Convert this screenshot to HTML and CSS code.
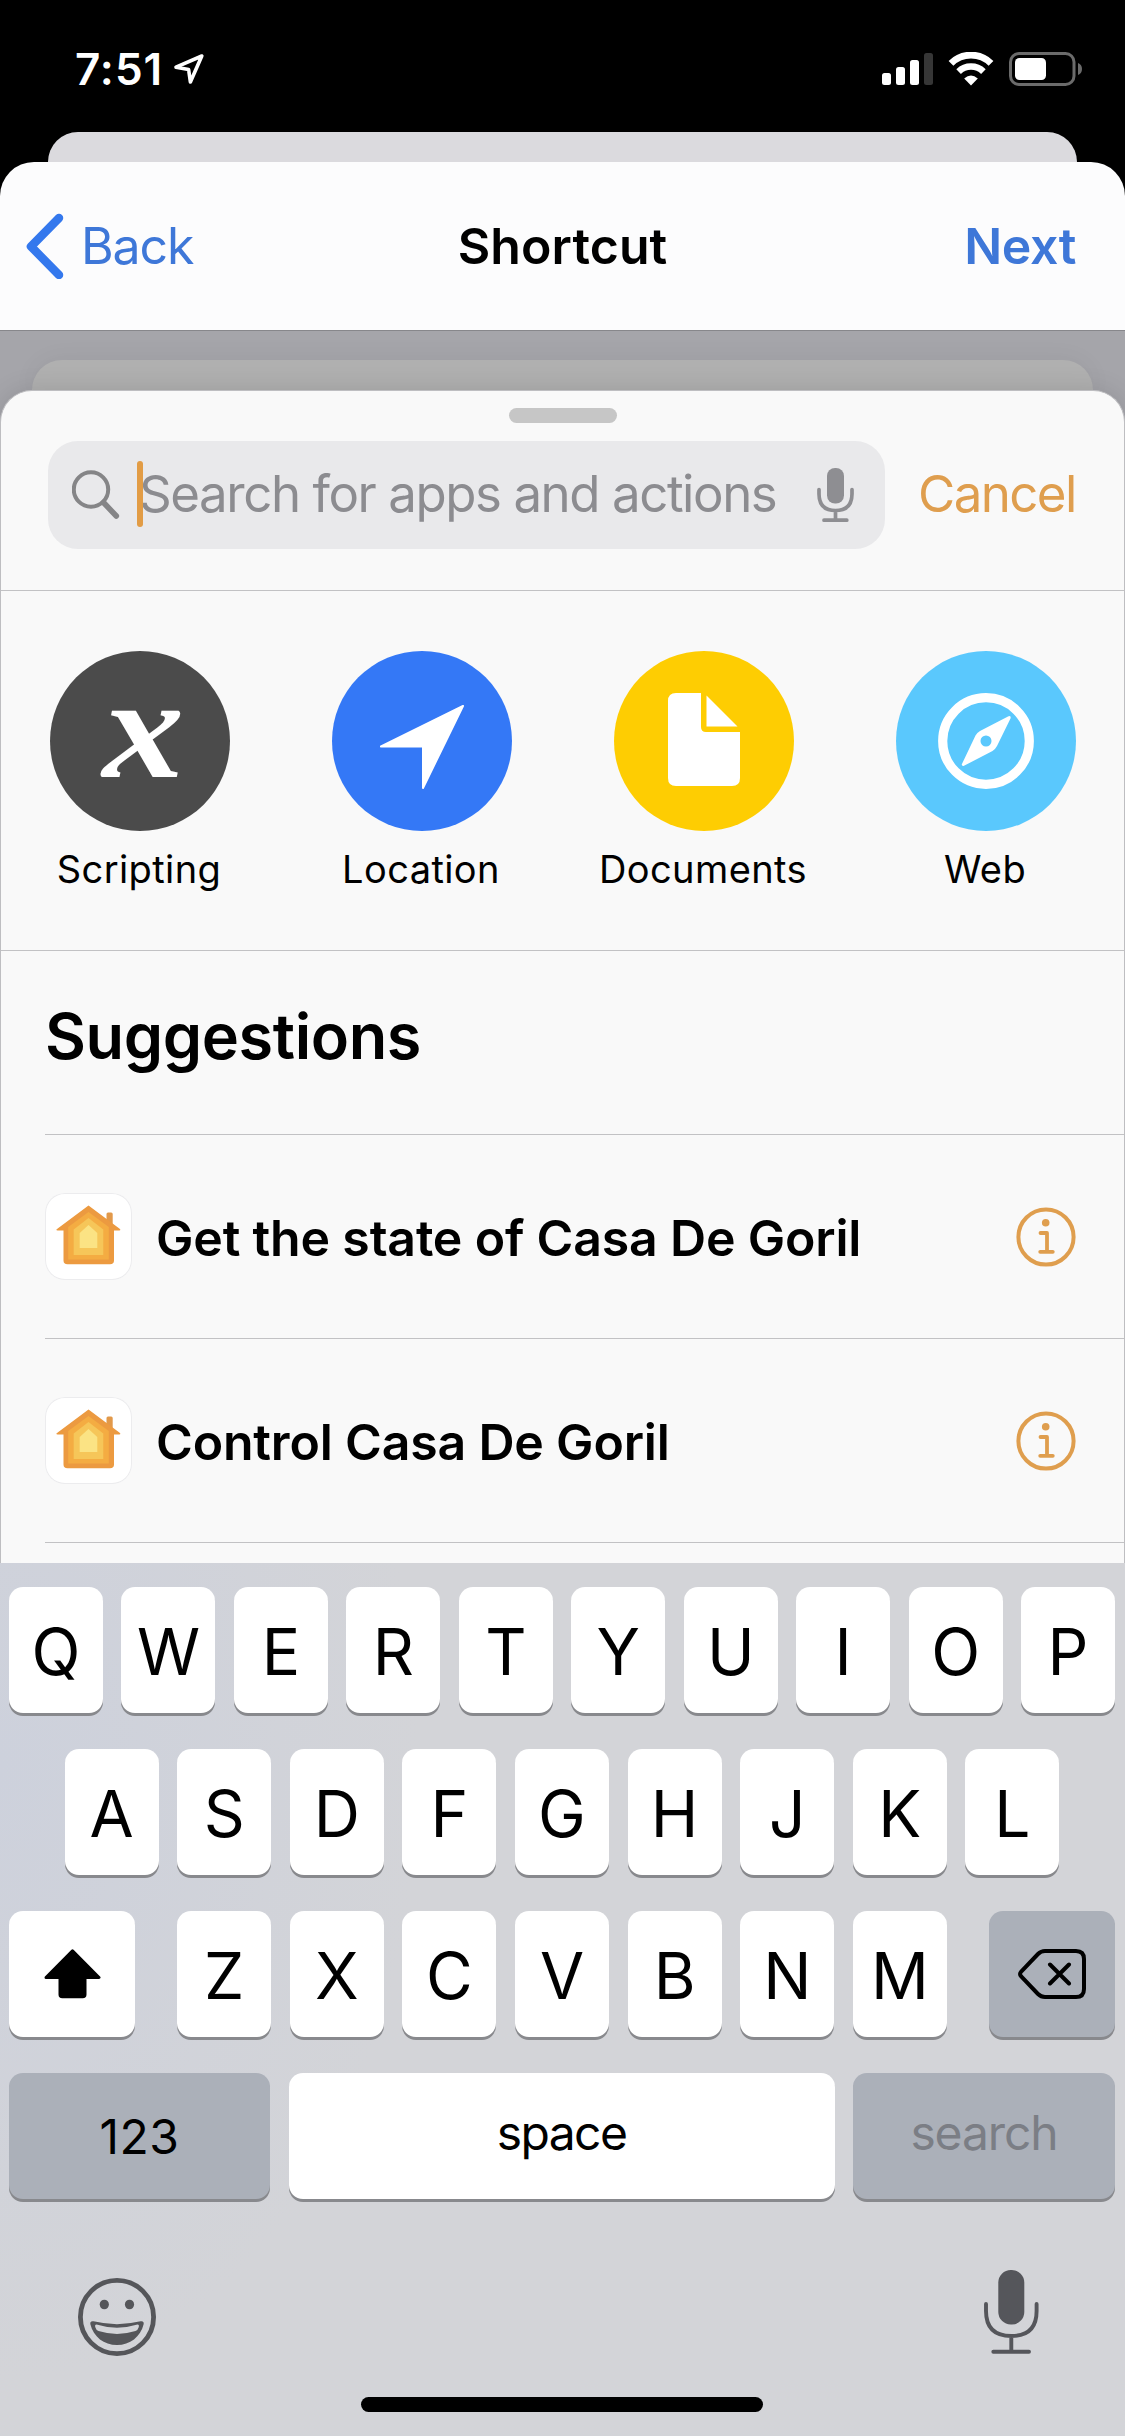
FILE: index.html
```html
<!DOCTYPE html>
<html lang="en">
<head>
<meta charset="utf-8">
<title>Shortcut</title>
<link rel="stylesheet" href="styles.css">
</head>
<body>
<div class="phone">
  <header class="status">
    <span class="time">7:51</span>
    <svg class="loc" width="34" height="34" viewBox="0 0 34 34"><path d="M28.8 4 L3 15.2 L15.6 17.6 L17.4 30 Z" fill="none" stroke="#fff" stroke-width="3.6" stroke-linejoin="round"/></svg>
    <div class="status-right">
      <svg width="51" height="34" viewBox="0 0 51 34"><rect x="0" y="21" width="9" height="12" rx="2.5" fill="#fff"/><rect x="14" y="15" width="9" height="18" rx="2.5" fill="#fff"/><rect x="28" y="8" width="9" height="25" rx="2.5" fill="#fff"/><rect x="42" y="1" width="9" height="32" rx="2.5" fill="#363636"/></svg>
      <svg width="46" height="34" viewBox="0 0 46 34"><path d="M3 11.3 A28.5 28.5 0 0 1 43 11.3" fill="none" stroke="#fff" stroke-width="6.8"/><path d="M10.6 19.6 A17.8 17.8 0 0 1 35.4 19.6" fill="none" stroke="#fff" stroke-width="6.6"/><path d="M16.2 26.4 Q23 20.6 29.8 26.4 L23 33.4 Z" fill="#fff"/></svg>
      <svg width="74" height="34" viewBox="0 0 74 34"><rect x="1.5" y="1.5" width="63.5" height="31" rx="8.5" fill="none" stroke="#6b6b6b" stroke-width="3"/><rect x="6" y="6" width="31" height="22" rx="4.5" fill="#fff"/><path d="M69 11 Q73 12.500 73 17 Q73 21.500 69 23 Z" fill="#6b6b6b"/></svg>
    </div>
  </header>

  <div class="peek peek-back"></div>
  <nav class="nav">
    <a class="back">
      <svg width="40" height="66" viewBox="0 0 40 66"><path d="M34 5 L6 33.500 L34 62" fill="none" stroke="#3478ed" stroke-width="8.5" stroke-linecap="round" stroke-linejoin="round"/></svg>
      <span>Back</span>
    </a>
    <h1 class="title">Shortcut</h1>
    <a class="next">Next</a>
  </nav>

  <div class="dim">
    <div class="peek peek-front"></div>
    <main class="sheet">
      <div class="handle"></div>
      <div class="search-row">
        <div class="field">
          <svg class="glass" width="50" height="50" viewBox="0 0 50 50"><circle cx="19" cy="19.500" r="17.2" fill="none" stroke="#858587" stroke-width="4"/><path d="M31.500 32.500 L44.300 46" stroke="#858587" stroke-width="5.600" stroke-linecap="round"/></svg>
          <span class="placeholder">Search for apps and actions<i class="caret"></i></span>
          <svg class="field-mic" width="37" height="55" viewBox="0 0 37 55"><rect x="10" y="0" width="17" height="35.500" rx="8" fill="#8e8e92"/><path d="M2 21.500 V26 Q2 42.500 18.500 42.500 Q35 42.500 35 26 V21.500 M18.500 43 V52 M7 52.200 H29.800" fill="none" stroke="#8e8e92" stroke-width="3.700" stroke-linecap="round"/></svg>
        </div>
        <a class="cancel">Cancel</a>
      </div>

      <section class="categories">
        <div class="cat"><div class="disc dark"><span class="var">x</span></div><span class="label">Scripting</span></div>
        <div class="cat"><div class="disc blue"><svg width="180" height="180" viewBox="0 0 180 180"><path d="M131 55 L49 95.500 H91 V137 Z" fill="#fff" stroke="#fff" stroke-width="2" stroke-linejoin="round"/></svg></div><span class="label">Location</span></div>
        <div class="cat"><div class="disc yellow"><svg width="180" height="180" viewBox="0 0 180 180"><path d="M87 42 V76 Q87 81 92 81 H126 V127 Q126 135 118 135 H62 Q54 135 54 127 V50 Q54 42 62 42 Z" fill="#fff"/><path d="M92.500 44.500 L123.500 75.500 H92.500 Z" fill="#fff"/></svg></div><span class="label">Documents</span></div>
        <div class="cat"><div class="disc sky"><svg width="180" height="180" viewBox="0 0 180 180"><circle cx="90" cy="90" r="43.300" fill="none" stroke="#fff" stroke-width="9.200"/><path fill-rule="evenodd" d="M114.500 65.500 Q115 66.800 114 68.500 L101 95 Q99.500 98 96.500 100 L68 114.800 Q66 115.500 65.700 113.500 L79.500 84.500 Q81 81.500 84 80 L112 65.400 Q113.800 64.600 114.500 65.500 Z M90 84.500 A5.500 5.500 0 1 0 90 95.500 A5.500 5.500 0 1 0 90 84.500 Z" fill="#fff"/></svg></div><span class="label">Web</span></div>
      </section>

      <h2 class="heading">Suggestions</h2>

      <div class="list">
        <div class="row">
          <div class="app"><svg width="87" height="87" viewBox="0 0 87 87"><path d="M61.500 32 V21 Q61.500 19.500 63 19.500 H66.200 Q67.700 19.500 67.700 21 V37 H61.500 Z" fill="#e2994a"/><path d="M43.500 12.500 L75 36 Q76 37.300 74.500 37.500 H69 V67.500 Q69 71.300 65 71.300 H22.500 Q18.500 71.300 18.500 67.500 V37.500 H12.500 Q10.500 37.300 12 36 Z" fill="#ec9a40"/><path d="M43.500 19 L63.800 34 V66.500 H23.200 V34 Z" fill="#f4ac42"/><path d="M43.500 25 L58.300 36.500 V62 H28.700 V36.500 Z" fill="#f6c659"/><path d="M43.500 32 L52.300 40 V55 H34.700 V40 Z" fill="#fbe384"/></svg></div>
          <span class="name">Get the state of Casa De Goril</span>
          <svg class="info" width="60" height="60" viewBox="0 0 60 60"><circle cx="30" cy="30" r="27.600" fill="none" stroke="#df9e4e" stroke-width="4"/><circle cx="29.700" cy="15.700" r="3.800" fill="#df9e4e"/><path d="M24.500 26 H31 V44.500 M24.200 44.800 H36.800" fill="none" stroke="#df9e4e" stroke-width="3.800" stroke-linecap="round" stroke-linejoin="round"/></svg>
        </div>
        <div class="row">
          <div class="app"><svg width="87" height="87" viewBox="0 0 87 87"><path d="M61.500 32 V21 Q61.500 19.500 63 19.500 H66.200 Q67.700 19.500 67.700 21 V37 H61.500 Z" fill="#e2994a"/><path d="M43.500 12.500 L75 36 Q76 37.300 74.500 37.500 H69 V67.500 Q69 71.300 65 71.300 H22.500 Q18.500 71.300 18.500 67.500 V37.500 H12.500 Q10.500 37.300 12 36 Z" fill="#ec9a40"/><path d="M43.500 19 L63.800 34 V66.500 H23.200 V34 Z" fill="#f4ac42"/><path d="M43.500 25 L58.300 36.500 V62 H28.700 V36.500 Z" fill="#f6c659"/><path d="M43.500 32 L52.300 40 V55 H34.700 V40 Z" fill="#fbe384"/></svg></div>
          <span class="name">Control Casa De Goril</span>
          <svg class="info" width="60" height="60" viewBox="0 0 60 60"><circle cx="30" cy="30" r="27.600" fill="none" stroke="#df9e4e" stroke-width="4"/><circle cx="29.700" cy="15.700" r="3.800" fill="#df9e4e"/><path d="M24.500 26 H31 V44.500 M24.200 44.800 H36.800" fill="none" stroke="#df9e4e" stroke-width="3.800" stroke-linecap="round" stroke-linejoin="round"/></svg>
        </div>
      </div>
    </main>
  </div>

  <div class="keyboard">
    <div class="keys">
      <b class="key">Q</b><b class="key">W</b><b class="key">E</b><b class="key">R</b><b class="key">T</b><b class="key">Y</b><b class="key">U</b><b class="key">I</b><b class="key">O</b><b class="key">P</b>
    </div>
    <div class="keys middle">
      <b class="key">A</b><b class="key">S</b><b class="key">D</b><b class="key">F</b><b class="key">G</b><b class="key">H</b><b class="key">J</b><b class="key">K</b><b class="key">L</b>
    </div>
    <div class="keys">
      <b class="key shift"><svg width="57" height="50" viewBox="0 0 57 50"><path d="M28.500 1.800 L55 28.500 H41 V45.500 Q41 47.800 38.700 47.800 H18.300 Q16 47.800 16 45.500 V28.500 H2 Z" fill="#000" stroke="#000" stroke-width="3" stroke-linejoin="round"/></svg></b>
      <b class="key">Z</b><b class="key">X</b><b class="key">C</b><b class="key">V</b><b class="key">B</b><b class="key">N</b><b class="key">M</b>
      <b class="key gray delete"><svg width="68" height="50" viewBox="0 0 68 50"><path d="M27 2 H58 Q66 2 66 10 V40 Q66 48 58 48 H27 Q23 48 20 45 L3.200 27.500 Q1 25 3.200 22.500 L20 5 Q23 2 27 2 Z M32 15.500 L51 34.500 M51 15.500 L32 34.500" fill="none" stroke="#000" stroke-width="4" stroke-linecap="round"/></svg></b>
    </div>
    <div class="keys words">
      <b class="key gray numbers">123</b><b class="key space"><span>space</span></b><b class="key gray search"><span>search</span></b>
    </div>
    <div class="tools">
      <svg width="78" height="78" viewBox="0 0 78 78"><circle cx="39" cy="39" r="36.600" fill="none" stroke="#55565a" stroke-width="4.800"/><ellipse cx="26.300" cy="26.500" rx="4.600" ry="4.800" fill="#55565a"/><ellipse cx="51.500" cy="26.500" rx="4.600" ry="4.800" fill="#55565a"/><path d="M12.300 46 Q12 42.600 15.500 43.300 Q39 49 62.500 43.300 Q66 42.600 65.700 46 C62.500 59 52 67 39 67 C26 67 15.500 59 12.300 46 Z" fill="#55565a"/><path d="M18.500 46.600 Q39 53 59.500 46.600 Q61.500 46.600 60.700 49.300 Q60 52 57.500 53 Q39 58.800 20.500 53 Q18 52 17.300 49.300 Q16.500 46.600 18.500 46.600 Z" fill="#d3d4d8"/></svg>
      <svg width="55" height="85" viewBox="0 0 55 85"><rect x="14.300" y="0" width="26" height="54.500" rx="12.500" fill="#55565b"/><path d="M2 34 V41 Q2 66 27.300 66 Q52.600 66 52.600 41 V34 M27.300 66 V81 M9.300 81.800 H45" fill="none" stroke="#55565b" stroke-width="3.900" stroke-linecap="round"/></svg>
    </div>
    <div class="home"></div>
  </div>
</div>
</body>
</html>
```

FILE: styles.css
```css
* { box-sizing: border-box; }

body {
  margin: 0;
  background: #000;
  color: #000;
  font-family: Inter, "Liberation Sans", sans-serif;
}

svg { display: block; flex: none; }

h1, h2 { margin: 0; }

.phone {
  display: flex;
  flex-direction: column;
  width: 1125px;
  height: 2436px;
  overflow: hidden;
}

/* Status bar */
.status {
  display: flex;
  align-items: flex-start;
  height: 132px;
  padding: 52px 42px 0 75px;
  color: #fff;
}

.time {
  font-size: 44px;
  font-weight: 600;
  line-height: 34px;
  letter-spacing: 1px;
}

.loc { margin-left: 10px; }

.status-right {
  display: flex;
  gap: 15px;
  margin-left: auto;
}

/* Stacked cards */
.peek { height: 30px; }

.peek-back {
  margin: 0 48px;
  border-radius: 30px 30px 0 0;
  background: #dbdade;
}

.nav {
  display: grid;
  grid-template-columns: 1fr auto 1fr;
  align-items: center;
  height: 169px;
  padding: 0 49px 0 25px;
  border-bottom: 1px solid #87878b;
  border-radius: 34px 34px 0 0;
  background: #fcfcfd;
  font-size: 50px;
  color: #3e77d8;
}

.back {
  display: flex;
  align-items: center;
  gap: 16px;
  letter-spacing: -1.1px;
}

.title {
  margin-left: 24px;
  color: #000;
  font-size: 50px;
  font-weight: 600;
  letter-spacing: 0.1px;
}

.next {
  justify-self: end;
  font-weight: 600;
  letter-spacing: -0.4px;
}

.dim {
  flex: none;
  height: 1232px;
  padding-top: 29px;
  background: #a5a5aa;
}

.peek-front {
  margin: 0 32px;
  border-radius: 42px 42px 0 0;
  background: #b0b0b0;
  box-shadow: 0 0 24px rgba(0, 0, 0, 0.06);
}

.sheet {
  position: relative;
  height: 1173px;
  padding-top: 17px;
  border: 1px solid #bebec1;
  border-bottom: 0;
  border-radius: 32px 32px 0 0;
  background: #f9f9f9;
  box-shadow: 0 0 26px rgba(0, 0, 0, 0.12);
}

.handle {
  width: 108px;
  height: 15px;
  margin: 0 auto;
  border-radius: 8px;
  background: #c6c6c6;
}

.search-row {
  display: flex;
  align-items: center;
  height: 168px;
  padding: 0 47px 23px;
  border-bottom: 1px solid #c2c2c4;
}

.field {
  display: flex;
  align-items: center;
  width: 837px;
  height: 108px;
  padding: 0 31px 0 24px;
  border-radius: 30px;
  background: #e9e9eb;
}

.placeholder {
  position: relative;
  margin: -4px 0 0 17px;
  color: #8c8c90;
  font-size: 51px;
  letter-spacing: -1.44px;
  white-space: nowrap;
}

.caret {
  position: absolute;
  top: -2px;
  left: -2px;
  width: 6px;
  height: 66px;
  border-radius: 3px;
  background: #e29c45;
}

.field-mic { margin-left: auto; }

.cancel {
  margin: -4px 0 0 33px;
  color: #df9e4e;
  font-size: 51px;
  letter-spacing: -1.6px;
}

/* Categories */
.categories {
  display: flex;
  justify-content: space-between;
  height: 360px;
  padding: 60px 48px 0 49px;
  border-bottom: 1px solid #c2c2c4;
}

.cat {
  display: flex;
  flex-direction: column;
  align-items: center;
  width: 180px;
}

.disc {
  display: flex;
  align-items: center;
  justify-content: center;
  width: 180px;
  height: 180px;
  border-radius: 50%;
}

.dark { background: #4b4b4b; }
.blue { background: #3478f6; }
.yellow { background: #fecd02; }
.sky { background: #5ac8fd; }

.var {
  color: #fff;
  font: italic 700 145px/180px "Liberation Serif", serif;
  transform: translate(3px, -13px) scaleX(1.127);
}

.label {
  margin: 15px 2px 0 0;
  font-size: 38px;
  line-height: 46px;
  letter-spacing: 0.4px;
  white-space: nowrap;
}

/* Suggestions */
.heading {
  height: 183px;
  padding-left: 44px;
  font-size: 63px;
  font-weight: 600;
  line-height: 170px;
  letter-spacing: -0.4px;
}

.list { margin-left: 44px; }

.row {
  display: flex;
  align-items: center;
  height: 204px;
  padding-right: 48px;
  border-top: 1px solid #c2c2c4;
}

.row:last-child {
  height: 205px;
  border-bottom: 1px solid #c2c2c4;
}

.app {
  width: 87px;
  height: 87px;
  border-radius: 20px;
  background: #fff;
  box-shadow: inset 0 0 0 1px #ececee;
}

.name {
  margin: 2px 0 0 24px;
  font-size: 50px;
  font-weight: 600;
  letter-spacing: -0.18px;
}

.info { margin-left: auto; }

/* Keyboard */
.keyboard {
  position: relative;
  display: flex;
  flex-direction: column;
  flex: 1;
  padding: 24px 10px 0 9px;
  background: radial-gradient(ellipse 420px 620px at 0 200px, #cdd1dc 0, #d3d4d8 100%);
}

.keys {
  display: flex;
  gap: 18.5px;
  height: 126px;
  margin-bottom: 36px;
}

.middle { padding: 0 55.5px; }

.key {
  display: flex;
  align-items: center;
  justify-content: center;
  flex: 1 1 0;
  padding-top: 2px;
  border-radius: 14px;
  background: #fff;
  box-shadow: 0 3px 0 #88898d;
  font-size: 64px;
  font-weight: 400;
}

.gray { background: #abb0b9; }

.shift, .delete { flex: 0 0 126px; padding-top: 0; }
.shift { margin-right: 23.5px; }
.delete { margin-left: 23.5px; }

.words .key { padding: 0; font-size: 48px; }
.words .numbers { flex: 0 0 261px; letter-spacing: 0.6px; }
.words .space { padding-bottom: 8px; letter-spacing: -1.6px; }
.words .search {
  flex: 0 0 262px;
  padding-bottom: 8px;
  color: #7b7e85;
  letter-spacing: -1.1px;
}

.tools {
  display: flex;
  justify-content: space-between;
  height: 85px;
  margin-top: 35px;
  padding: 0 76px 0 69px;
}

.tools svg:first-child { margin-top: 8px; }

.home {
  width: 402px;
  height: 15px;
  margin: 42px auto 0;
  border-radius: 8px;
  background: #000;
}
```
